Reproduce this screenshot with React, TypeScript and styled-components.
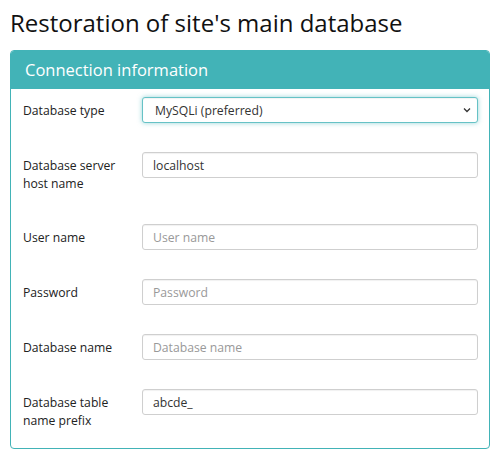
import React from "react";
import styled, { createGlobalStyle } from "styled-components";

const Global = createGlobalStyle`
  html, body { margin: 0; padding: 0; background: #fff; }
  body { font-family: "Open Sans", "Noto Sans", sans-serif; color: #333; }
  * { box-sizing: border-box; }
`;

const Page = styled.div`
  padding: 6px 10px 10px 10px;
`;

const Title = styled.h1`
  margin: 0 0 10px 0;
  font-size: 24px;
  font-weight: 400;
  color: #111;
  line-height: 34px;
`;

const Panel = styled.section`
  border: 1px solid #42b3b7;
  border-radius: 4px;
  overflow: hidden;
`;

const PanelHeader = styled.div`
  background: #42b3b7;
  color: #fff;
  font-size: 16.5px;
  height: 38px;
  line-height: 38px;
  padding: 0 14px;
`;

const PanelBody = styled.div`
  padding: 8px 11px 16px 11px;
  display: flex;
  flex-direction: column;
  gap: 29px;
`;

const Row = styled.div`
  display: grid;
  grid-template-columns: 120px 1fr;
  align-items: start;
`;

const Label = styled.label`
  font-size: 12.2px;
  line-height: 17.5px;
  padding: 5px 12px 3px 1px;
  color: #222;
`;

const fieldCss = `
  width: 100%;
  height: 26px;
  border: 1px solid #cfcfcf;
  border-radius: 3px;
  padding: 0 10px;
  font-family: "Open Sans", "Noto Sans", sans-serif;
  font-size: 12.2px;
  color: #333;
  background: #fff;
  box-shadow: inset 0 1px 1px rgba(0,0,0,0.06);
  outline: none;
`;

const Input = styled.input`
  ${fieldCss}
  &::placeholder { color: #999; }
`;

const SelectWrap = styled.div`
  position: relative;
`;

const Select = styled.select<{ $focused?: boolean }>`
  ${fieldCss}
  appearance: none;
  -webkit-appearance: none;
  padding-left: 12px;
  border-color: ${(p) => (p.$focused ? "#66c2c6" : "#cfcfcf")};
  box-shadow: ${(p) =>
    p.$focused
      ? "inset 0 1px 1px rgba(0,0,0,0.05), 0 0 5px rgba(66,179,183,0.55)"
      : "inset 0 1px 1px rgba(0,0,0,0.06)"};
`;

const Chevron = styled.svg`
  position: absolute;
  right: 7px;
  top: 10px;
  width: 8px;
  height: 6px;
  pointer-events: none;
`;

const fields = [
  { label: "Database server host name", value: "localhost", placeholder: "" },
  { label: "User name", value: "", placeholder: "User name" },
  { label: "Password", value: "", placeholder: "Password", type: "password" },
  { label: "Database name", value: "", placeholder: "Database name" },
  { label: "Database table name prefix", value: "abcde_", placeholder: "" },
];

export default function App() {
  return (
    <>
      <Global />
      <Page>
        <Title>Restoration of site's main database</Title>
        <Panel>
          <PanelHeader>Connection information</PanelHeader>
          <PanelBody>
            <Row>
              <Label>Database type</Label>
              <SelectWrap>
                <Select $focused defaultValue="mysqli">
                  <option value="mysqli">MySQLi (preferred)</option>
                  <option value="mysql">MySQL</option>
                </Select>
                <Chevron viewBox="0 0 8 6">
                  <path d="M1 1.5 L4 4.5 L7 1.5" fill="none" stroke="#333" strokeWidth="1.3" />
                </Chevron>
              </SelectWrap>
            </Row>
            {fields.map((f) => (
              <Row key={f.label}>
                <Label>{f.label}</Label>
                <Input
                  type={f.type === "password" ? "password" : "text"}
                  defaultValue={f.value}
                  placeholder={f.placeholder}
                />
              </Row>
            ))}
          </PanelBody>
        </Panel>
      </Page>
    </>
  );
}
